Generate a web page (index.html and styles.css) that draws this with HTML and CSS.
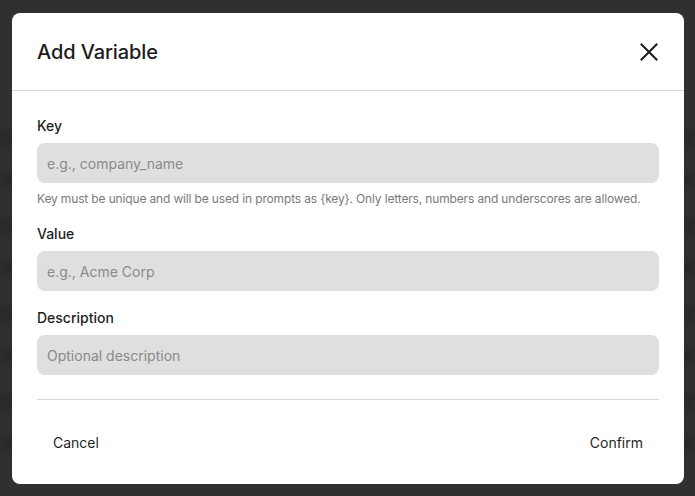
FILE: index.html
```html
<!DOCTYPE html>
<html lang="en">
<head>
  <meta charset="UTF-8" />
  <meta name="viewport" content="width=device-width, initial-scale=1" />
  <title>Add Variable</title>
  <link rel="stylesheet" href="styles.css">
</head>
<body>

  <!-- Dimmed page behind the dialog -->
  <div class="backdrop">
    <div class="ghost-row"></div>
    <div class="ghost-row"></div>
    <div class="ghost-row"></div>
    <div class="ghost-row"></div>
    <div class="ghost-row"></div>
    <div class="ghost-row"></div>
    <div class="ghost-row"></div>
    <div class="ghost-row"></div>
  </div>

  <!-- Add Variable dialog -->
  <div class="modal">
    <div class="modal-header">
      <h2 class="modal-title">Add Variable</h2>
      <button class="close-btn" aria-label="Close">
        <svg width="18" height="18" viewBox="0 0 18 18" fill="none" stroke="#1c1c1c" stroke-width="2" stroke-linecap="square">
          <path d="M1.5 1.5 L16.5 16.5 M16.5 1.5 L1.5 16.5" />
        </svg>
      </button>
    </div>

    <div class="modal-body">
      <div class="field">
        <label class="field-label" for="var-key">Key</label>
        <input class="field-input" id="var-key" placeholder="e.g., company_name" />
        <p class="field-hint">Key must be unique and will be used in prompts as {key}. Only letters, numbers and underscores are allowed.</p>
      </div>

      <div class="field">
        <label class="field-label" for="var-value">Value</label>
        <input class="field-input" id="var-value" placeholder="e.g., Acme Corp" />
      </div>

      <div class="field">
        <label class="field-label" for="var-desc">Description</label>
        <input class="field-input" id="var-desc" placeholder="Optional description" />
      </div>
    </div>

    <div class="modal-footer">
      <button class="text-btn">Cancel</button>
      <button class="text-btn">Confirm</button>
    </div>
  </div>

</body>
</html>
```

FILE: styles.css
```css
* {
  box-sizing: border-box;
}

body {
  margin: 0;
  padding: 0;
  background: #303030;
  font-family: Inter, "Noto Sans", sans-serif;
  color: #1c1c1c;
  height: 496px;
  overflow: hidden;
}

.backdrop {
  position: absolute;
  inset: 0;
  padding-top: 130px;
  display: flex;
  flex-direction: column;
  gap: 30px;
}

.ghost-row {
  height: 14px;
  background: linear-gradient(90deg, #282828 0%, #2c2c2c 50%, #292826 100%);
  filter: blur(4px);
}

.modal {
  position: absolute;
  left: 12px;
  top: 13px;
  width: 672px;
  height: 471px;
  background: #fff;
  border-radius: 8px;
  display: flex;
  flex-direction: column;
}

.modal-header {
  display: flex;
  align-items: center;
  justify-content: space-between;
  padding: 25px 25px 24px;
  border-bottom: 1px solid #d6d6d6;
}

.modal-title {
  margin: 0;
  font-size: 20px;
  line-height: 28px;
  font-weight: 500;
  letter-spacing: -0.1px;
}

.close-btn {
  background: none;
  border: none;
  padding: 0;
  margin-right: 1px;
  width: 18px;
  height: 18px;
  cursor: pointer;
}

.close-btn svg {
  display: block;
}

.modal-body {
  padding: 25px 25px 24px;
  display: flex;
  flex-direction: column;
  gap: 17px;
}

.field {
  display: flex;
  flex-direction: column;
}

.field-label {
  font-size: 14px;
  line-height: 20px;
  font-weight: 500;
  color: #1f1f1f;
  margin-bottom: 7px;
}

.field-input {
  height: 40px;
  border: none;
  border-radius: 8px;
  background: #dfdfdf;
  padding: 0 10px;
  font-family: inherit;
  font-size: 14px;
  color: #1c1c1c;
  outline: none;
}

.field-input::placeholder {
  color: #8a8a8a;
}

.field-hint {
  margin: 8px 0 0;
  font-size: 12px;
  line-height: 16px;
  color: #7a7a7a;
  letter-spacing: -0.15px;
}

.modal-footer {
  margin: 0 25px;
  padding: 24px 0;
  border-top: 1px solid #d6d6d6;
  display: flex;
  justify-content: space-between;
}

.text-btn {
  height: 36px;
  padding: 0 16px;
  background: none;
  border: none;
  border-radius: 6px;
  font-family: inherit;
  font-size: 14px;
  color: #1f1f1f;
  cursor: pointer;
}
```
